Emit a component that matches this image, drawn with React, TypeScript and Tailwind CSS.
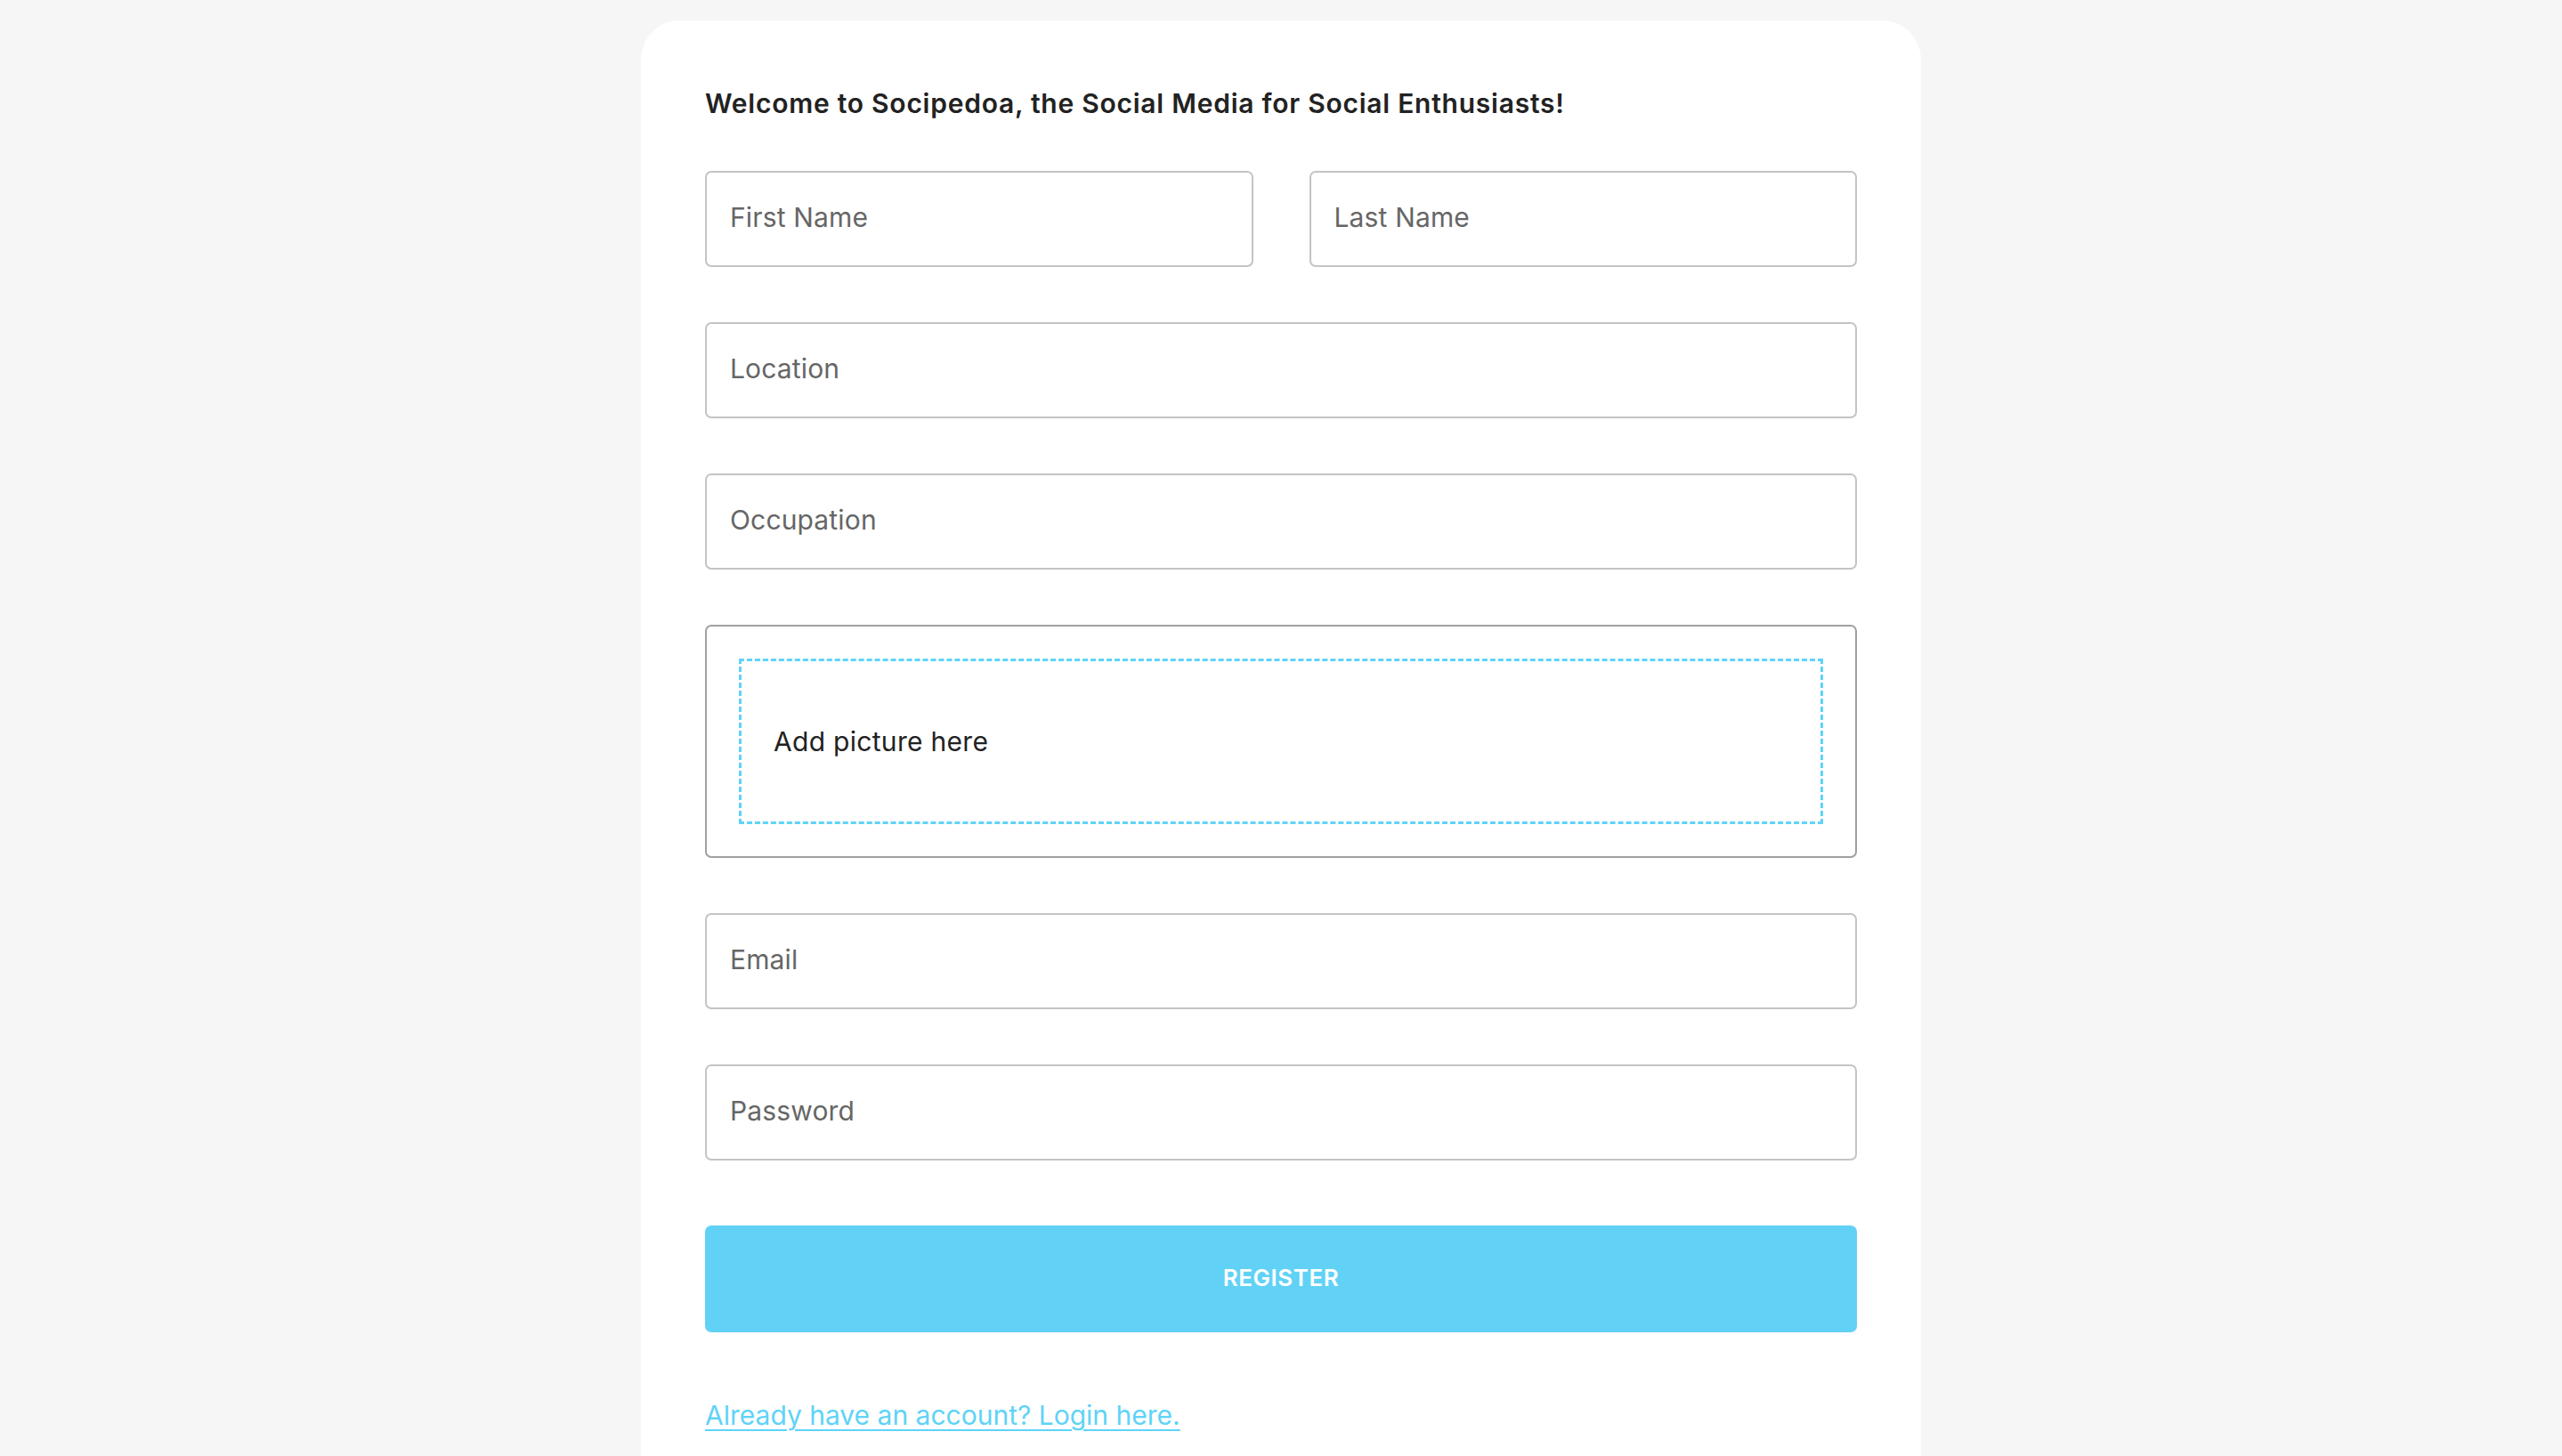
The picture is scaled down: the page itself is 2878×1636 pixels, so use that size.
import React from "react";

const font = { fontFamily: "Inter, 'Noto Sans', Roboto, sans-serif" };

function Field({ placeholder, wide }: { placeholder: string; wide?: boolean }) {
  return (
    <input
      type="text"
      placeholder={placeholder}
      className={
        "h-[108px] w-full rounded-[7px] border-2 border-[#c4c4c4] bg-white pb-[4px] pl-[26px] text-[30px] tracking-[0.005em] text-[#222] outline-none placeholder:text-[#666] " +
        (wide ? "col-span-2" : "")
      }
    />
  );
}

export default function App() {
  return (
    <main className="min-h-screen bg-[#f6f6f6] pt-[23px]" style={font}>
      <div className="mx-auto w-[1438px] rounded-[44px] bg-white px-[72px] pt-[78px] pb-[72px]">
        <h5 className="text-[30px] leading-[30px] font-semibold tracking-[0.025em] text-[#222]">
          Welcome to Socipedoa, the Social Media for Social Enthusiasts!
        </h5>

        <form className="mt-[61px]">
          <div className="grid grid-cols-2 gap-x-[63px] gap-y-[62px]">
            <Field placeholder="First Name" />
            <Field placeholder="Last Name" />
            <Field placeholder="Location" wide />
            <Field placeholder="Occupation" wide />

            <div className="col-span-2 h-[262px] rounded-[7px] border-2 border-[#a0a0a0] p-[36px]">
              <div className="flex h-full items-center border-[3px] border-dashed border-[#5fd3f7] px-[36px]">
                <p className="text-[30px] tracking-[0.01em] text-[#222]">Add picture here</p>
              </div>
            </div>

            <Field placeholder="Email" wide />
            <Field placeholder="Password" wide />
          </div>

          <button
            type="button"
            className="mt-[73px] flex h-[120px] w-full items-center justify-center rounded-[7px] bg-[#61d2f6] pb-[4px] text-[26px] font-semibold tracking-[0.02em] text-white uppercase"
          >
            Register
          </button>

          <p className="mt-[79px] text-[30px] leading-[29px]">
            <a
              href="#"
              className="text-[#5fd3f7] underline decoration-2 underline-offset-[5px]"
            >
              Already have an account? Login here.
            </a>
          </p>
        </form>
      </div>
    </main>
  );
}
